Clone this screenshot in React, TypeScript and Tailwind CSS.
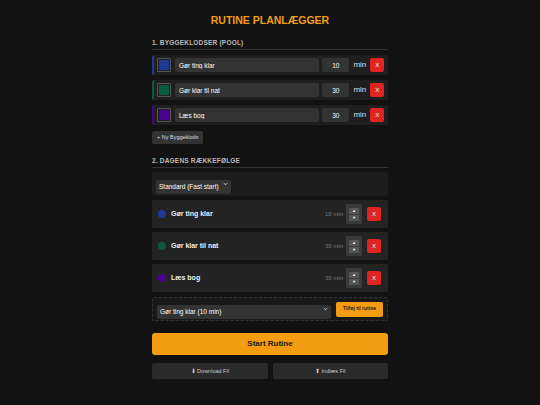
import { useState } from "react";

type Block = { id: number; name: string; minutes: number; color: string };

const initialBlocks: Block[] = [
  { id: 1, name: "Gør ting klar", minutes: 10, color: "#1f3a93" },
  { id: 2, name: "Gør klar til nat", minutes: 30, color: "#0b5940" },
  { id: 3, name: "Læs bog", minutes: 30, color: "#4b0090" },
];

const font = { fontFamily: '"Liberation Sans", Arial, sans-serif' };

function SectionTitle({ children }: { children: React.ReactNode }) {
  return (
    <div className="border-b border-[#333] pb-[2px] text-[6.5px] leading-[9px] font-bold tracking-[0.2px] text-[#bbbbbb]">
      {children}
    </div>
  );
}

function Chevron() {
  return (
    <svg
      className="pointer-events-none absolute right-[3px] top-1/2 h-[5px] w-[5px] -translate-y-1/2"
      viewBox="0 0 10 10"
      fill="none"
      stroke="#ddd"
      strokeWidth="2"
    >
      <path d="M2 3.5 5 6.5 8 3.5" />
    </svg>
  );
}

export default function App() {
  const [blocks, setBlocks] = useState<Block[]>(initialBlocks);
  const [sequence, setSequence] = useState<number[]>([1, 2, 3]);

  const updateBlock = (id: number, field: keyof Block, value: string | number) => {
    setBlocks(blocks.map((b) => (b.id === id ? { ...b, [field]: value } : b)));
  };

  return (
    <div className="min-h-[405px] w-full bg-[#121212] text-white" style={font}>
      <div className="mx-auto flex w-[236px] flex-col pt-[12px]">
        <h1 className="text-center text-[10.5px] leading-[16px] font-bold text-[#f39c12]">
          RUTINE PLANLÆGGER
        </h1>

        {/* pool of building blocks */}
        <div className="mt-[10px]">
          <SectionTitle>1. BYGGEKLODSER (POOL)</SectionTitle>
          <div className="mt-[5px] flex flex-col gap-[5px]">
            {blocks.map((b) => (
              <div
                key={b.id}
                className="flex h-[20px] items-center gap-[3px] rounded-[2px] border-l-2 bg-[#1f1f1f] pl-[3px] pr-[4px]"
                style={{ borderLeftColor: b.color }}
              >
                <div className="h-[14px] w-[14px] shrink-0 rounded-[1px] border border-[#555] p-[1px]">
                  <div className="h-full w-full" style={{ backgroundColor: b.color }} />
                </div>
                <input
                  value={b.name}
                  onChange={(e) => updateBlock(b.id, "name", e.target.value)}
                  className="ml-[1px] h-[14px] w-[147px] rounded-[2px] bg-[#333] px-[4px] text-[6.5px] text-white outline-none"
                />
                <input
                  value={b.minutes}
                  onChange={(e) => updateBlock(b.id, "minutes", Number(e.target.value))}
                  className="h-[14px] w-[27px] rounded-[2px] bg-[#333] text-center text-[6.5px] text-white outline-none"
                />
                <span className="ml-[1px] text-[8px] text-[#ddd]">min</span>
                <button className="ml-[1px] flex h-[14px] w-[14px] items-center justify-center rounded-[2px] bg-[#e02424] text-[6px] text-white">
                  X
                </button>
              </div>
            ))}
          </div>
          <button className="mt-[6px] block h-[13px] rounded-[2px] bg-[#333] px-[5px] text-[5.5px] leading-[13px] text-[#ddd]">
            + Ny Byggeklods
          </button>
        </div>

        {/* today's order */}
        <div className="mt-[12px]">
          <SectionTitle>2. DAGENS RÆKKEFØLGE</SectionTitle>
          <div className="mt-[4px] flex h-[24px] items-center rounded-[2px] bg-[#1d1d1d] px-[4px]">
            <div className="relative">
              <select className="h-[14px] w-[75px] appearance-none rounded-[2px] bg-[#333] px-[3px] text-[6.5px] text-white outline-none">
                <option>Standard (Fast start)</option>
              </select>
              <Chevron />
            </div>
          </div>

          <div className="mt-[4px] flex flex-col gap-[4px]">
            {sequence.map((id) => {
              const b = blocks.find((x) => x.id === id)!;
              return (
                <div key={id} className="flex h-[28px] items-center rounded-[2px] bg-[#232323] pl-[6px] pr-[7px]">
                  <span className="h-[8px] w-[8px] rounded-full" style={{ backgroundColor: b.color }} />
                  <span className="ml-[5px] text-[7px] font-bold text-[#eee]">{b.name}</span>
                  <span className="ml-auto text-[6px] text-[#777]">{b.minutes} min</span>
                  <div className="ml-[3px] flex h-[20px] w-[16px] flex-col items-center justify-center gap-[1px] bg-[#3a3a3a]">
                    <button className="flex h-[6px] w-[10px] items-center justify-center bg-[#555] text-[4px] leading-none text-white">
                      ▲
                    </button>
                    <button className="flex h-[6px] w-[10px] items-center justify-center bg-[#555] text-[4px] leading-none text-white">
                      ▼
                    </button>
                  </div>
                  <button
                    onClick={() => setSequence(sequence.filter((s) => s !== id))}
                    className="ml-[5px] flex h-[14px] w-[14px] items-center justify-center rounded-[2px] bg-[#e02424] text-[6px] text-white"
                  >
                    X
                  </button>
                </div>
              );
            })}
          </div>

          <div className="mt-[5px] flex h-[24px] items-center gap-[5px] rounded-[2px] border border-dashed border-[#333] bg-[#181818] px-[4px]">
            <div className="relative flex-1">
              <select className="h-[14px] w-full appearance-none rounded-[2px] bg-[#333] px-[3px] text-[6.5px] text-white outline-none">
                {blocks.map((b) => (
                  <option key={b.id}>
                    {b.name} ({b.minutes} min)
                  </option>
                ))}
              </select>
              <Chevron />
            </div>
            <button className="h-[15px] w-[47px] rounded-[2px] bg-[#f39c12] text-[5px] font-bold text-[#222]">
              Tilføj til rutine
            </button>
          </div>
        </div>

        <button className="mt-[12px] h-[22px] w-full rounded-[3px] bg-[#f39c12] text-[8px] font-bold text-[#1a1a1a]">
          Start Rutine
        </button>

        <div className="mt-[8px] grid grid-cols-2 gap-[5px]">
          <button className="h-[16px] rounded-[2px] bg-[#2a2a2a] text-[5.5px] text-[#ccc]">⬇ Download Fil</button>
          <button className="h-[16px] rounded-[2px] bg-[#2a2a2a] text-[5.5px] text-[#ccc]">⬆ Indlæs Fil</button>
        </div>
      </div>
    </div>
  );
}
